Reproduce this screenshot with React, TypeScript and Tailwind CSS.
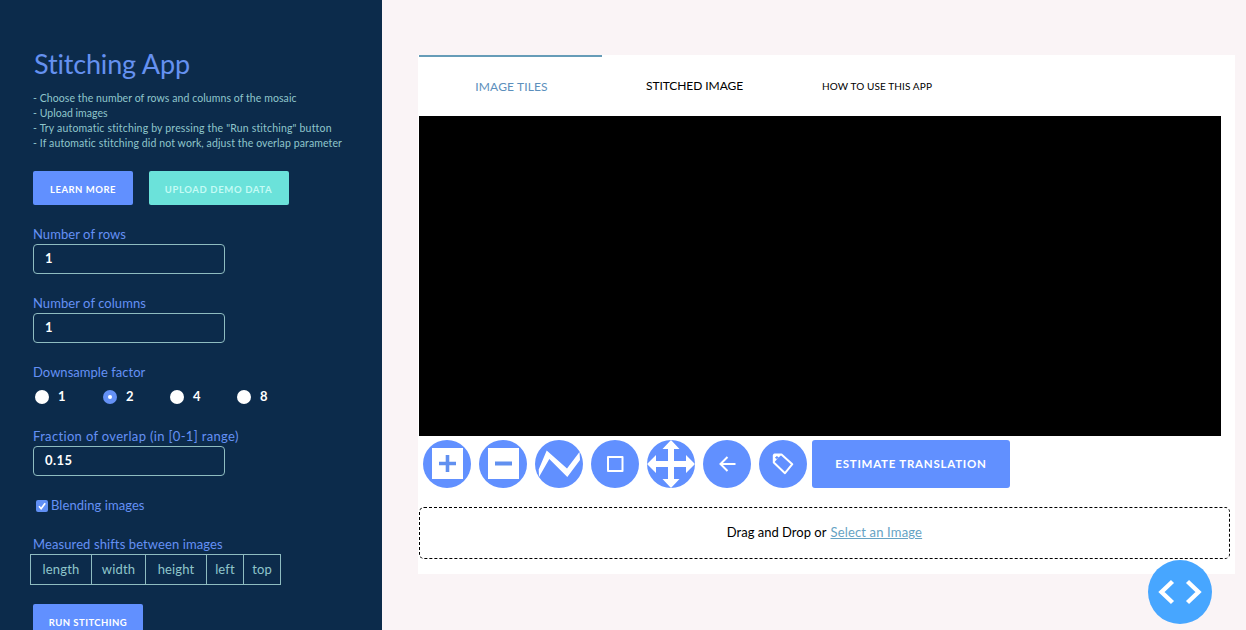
import type { ReactNode } from "react";

function Field({ label, value, labelClass }: { label: string; value: string; labelClass: string }) {
  return (
    <div>
      <div className={`h-[18px] text-[13px] leading-[16px] text-[#6591f5] ${labelClass}`}>{label}</div>
      <div className="flex h-[30px] w-48 items-center rounded-[4px] border border-[#8fbcc0] pl-[11px] text-[13px] font-bold tracking-[0.43px] text-white">
        {value}
      </div>
    </div>
  );
}

function Radio({ value, checked, className }: { value: string; checked?: boolean; className: string }) {
  return (
    <div className={`flex items-center text-[13px] font-bold text-white ${className}`}>
      <span
        className={`mr-[9px] flex size-[14px] items-center justify-center rounded-full ${checked ? "bg-[#6591f5]" : "bg-white"}`}
      >
        {checked && <span className="size-1 rounded-full bg-white" />}
      </span>
      {value}
    </div>
  );
}

function Tool({ children }: { children: ReactNode }) {
  return (
    <button className="size-12 shrink-0 overflow-hidden rounded-full bg-[#6190ff]">
      <svg viewBox="0 0 48 48" className="size-12" fill="none">
        {children}
      </svg>
    </button>
  );
}

export default function App() {
  return (
    <div className="relative flex h-[630px] w-[1246px] overflow-hidden bg-[#faf4f6] font-['Lato',sans-serif]">
      <aside className="h-full w-[382px] shrink-0 overflow-hidden bg-[#0c2b4b] pt-[44px] pl-[33px]">
        <h1 className="h-10 pl-px text-[27px] leading-[39px] tracking-[-0.15px] text-[#6591f0]">Stitching App</h1>
        <div className="mt-[7px] text-[10.5px] leading-[15px] whitespace-nowrap text-[#8fc6cb]">
          <p className="tracking-[0.08px]">- Choose the number of rows and columns of the mosaic</p>
          <p className="tracking-[0.03px]">- Upload images</p>
          <p className="tracking-[0.18px]">- Try automatic stitching by pressing the "Run stitching" button</p>
          <p className="tracking-[0.11px]">- If automatic stitching did not work, adjust the overlap parameter</p>
        </div>
        <div className="mt-5 flex gap-4">
          <button className="h-[34px] w-[100px] rounded-[2px] bg-[#6190ff] pt-[5px] text-[9.5px] font-bold tracking-[0.5px] text-white">
            LEARN MORE
          </button>
          <button className="h-[34px] w-[140px] rounded-[2px] bg-[#6be2da] pt-[5px] pr-px text-[9.5px] font-bold tracking-[0.63px] text-[#c4fbf5]">
            UPLOAD DEMO DATA
          </button>
        </div>

        <div className="mt-[21px] flex flex-col gap-[21px]">
          <Field label="Number of rows" value="1" labelClass="tracking-[0.06px]" />
          <Field label="Number of columns" value="1" labelClass="tracking-[0.06px]" />
          <div>
            <div className="h-[18px] text-[13px] leading-[16px] tracking-[0.03px] text-[#6591f5]">Downsample factor</div>
            <div className="mt-1.5 flex h-[19px] items-start pl-[2px]">
              <Radio value="1" className="h-[18px] w-[68px]" />
              <Radio value="2" checked className="h-[18px] w-[67px]" />
              <Radio value="4" className="h-[18px] w-[67px]" />
              <Radio value="8" className="h-[18px] w-[67px]" />
            </div>
          </div>
          <Field label="Fraction of overlap (in [0-1] range)" value="0.15" labelClass="tracking-[0.34px]" />
          <label className="flex h-[18px] items-center pl-[3px] text-[13px] tracking-[0.06px] text-[#6591f5]">
            <span className="mr-[3px] flex size-3 items-center justify-center rounded-[2px] bg-[#6190f5]">
              <svg viewBox="0 0 12 12" className="size-3" fill="none" stroke="white" strokeWidth="1.7">
                <path d="M3 6.3 5.1 8.7 9.2 3.2" />
              </svg>
            </span>
            Blending images
          </label>
          <div>
            <div className="h-[18px] text-[13px] leading-[17px] tracking-[0.1px] text-[#6591f5]">
              Measured shifts between images
            </div>
            <div className="-ml-[3px] flex h-[31px] w-[251px] border border-[#8fbcc0] text-center text-[13px] leading-[29px] tracking-[0.15px] text-[#8fc6cb]">
              <span className="w-[61px] border-r border-[#8fbcc0]">length</span>
              <span className="w-[54px] border-r border-[#8fbcc0]">width</span>
              <span className="w-[61px] border-r border-[#8fbcc0]">height</span>
              <span className="w-[37px] border-r border-[#8fbcc0]">left</span>
              <span className="w-[36px]">top</span>
            </div>
            <button className="mt-[19px] h-[34px] w-[110px] rounded-[2px] bg-[#6190ff] pt-[5px] text-[9.5px] font-bold tracking-[0.45px] text-white">
              RUN STITCHING
            </button>
          </div>
        </div>
      </aside>

      <main className="mt-[55px] ml-9 h-[519px] w-[817px] bg-white">
        <div className="flex h-[61px] pl-px">
          <div className="w-[183px] border-t-2 border-[#669cb8] pt-[20px] pl-[2px] text-center text-[12px] leading-[20px] tracking-[0.13px] text-[#5c8fbc]">
            IMAGE TILES
          </div>
          <div className="w-[184px] pt-[21px] pl-px text-center text-[12px] leading-[20px] tracking-[-0.07px] text-black">
            STITCHED IMAGE
          </div>
          <div className="w-[182px] pt-[21px] text-center text-[10px] leading-[20px] tracking-[0.12px] text-black">
            HOW TO USE THIS APP
          </div>
        </div>
        <div className="ml-px h-[320px] w-[802px] bg-black" />
        <div className="mt-1 flex gap-2 pl-[5px]">
          <Tool>
            <path fill="white" d="M9 8h31v31H9z" />
            <path stroke="#6190f0" strokeWidth="3.6" d="M16 23.5h17M24.5 15v17" />
          </Tool>
          <Tool>
            <path fill="white" d="M9 8h31v31H9z" />
            <path stroke="#6190f0" strokeWidth="3.8" d="M16 23.5h17" />
          </Tool>
          <Tool>
            <path fill="white" d="M4 37 3.7 29.5 11.7 10.5 32 28.5 44.5 12 45 20 32.3 37 14.3 19z" />
          </Tool>
          <Tool>
            <path stroke="white" strokeWidth="2" strokeLinejoin="round" d="M17 17h14.5v14H17z" />
          </Tool>
          <Tool>
            <path
              fill="white"
              d="M24 0 32.5 9H27V21H39V15L48 24 39 33V27H27V39H32.5L24 48 15.500 39H21V27H9V33L0 24 9 15V21H21V9H15.500z"
            />
          </Tool>
          <Tool>
            <path stroke="white" strokeWidth="2" d="M32.500 24H18M24.500 17 17.500 24l7 7" />
          </Tool>
          <Tool>
            <path
              stroke="white"
              strokeWidth="2"
              strokeLinejoin="round"
              d="M15.500 14.500h7L33.300 24.200 26 33.200 14.800 22.500v-7.200z"
            />
            <path fill="white" d="M14.500 14.500h8l-7.500 8z" />
            <path stroke="#6190ff" strokeWidth="1.200" d="M17.900 15.900v3.400M16.200 17.600h3.400" />
          </Tool>
          <button className="-ml-[3px] h-12 w-[198px] rounded-[3px] bg-[#6190ff] text-[11.5px] font-bold tracking-[0.75px] text-white">
            ESTIMATE TRANSLATION
          </button>
        </div>
        <div className="mt-[19px] ml-px flex h-[52px] w-[811px] items-center justify-center rounded-[5px] border border-dashed border-black text-[13px] whitespace-pre text-black">
          <span>Drag and Drop or </span>
          <a className="pl-px tracking-[0.16px] text-[#66a3c4] underline">Select an Image</a>
        </div>
      </main>

      <button className="absolute top-[560px] left-[1148px] size-16 rounded-full bg-[#47a6ff]">
        <svg viewBox="0 0 64 64" className="size-16" fill="none" stroke="white" strokeWidth="4.4">
          <path d="M24.5 21.500 13.500 32 24.500 42.500M39.500 21.500l11 10.500-11 10.500" />
        </svg>
      </button>
    </div>
  );
}
